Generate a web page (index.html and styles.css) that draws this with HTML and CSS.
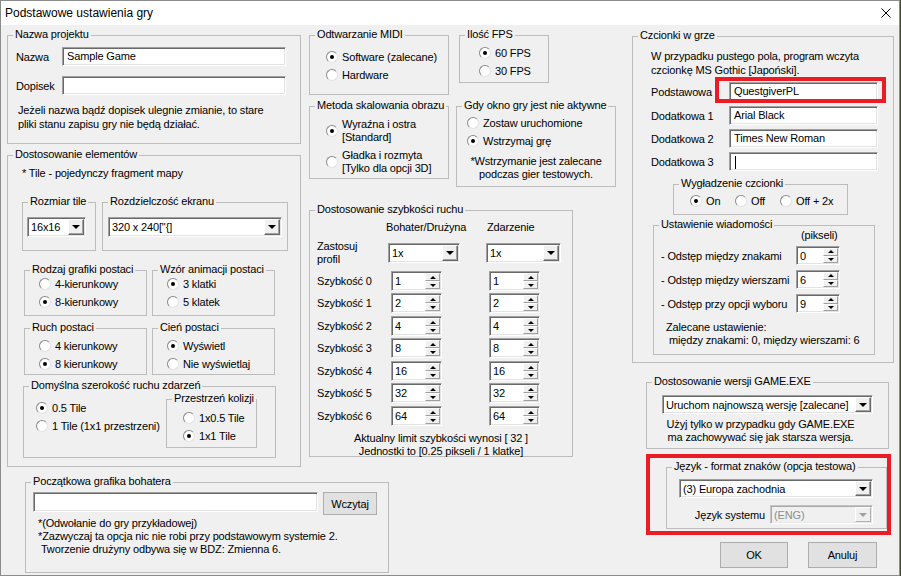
FILE: index.html
```html
<!DOCTYPE html>
<html lang="pl">
<head>
    <meta charset="UTF-8">
    <title>Podstawowe ustawienia gry</title>
    <link rel="stylesheet" href="styles.css">
</head>
<body>
<div class="window">
    <div class="titlebar">
        <span class="title">Podstawowe ustawienia gry</span>
        <svg class="close" width="10" height="10" viewBox="0 0 10 10"><path d="M0.5 0.5L9.5 9.5M9.5 0.5L0.5 9.5" stroke="#000" stroke-width="1"/></svg>
    </div>

    <div class="content">
        <div class="left">
            <div class="cols">
                <!-- left column -->
                <div class="col1">
                    <div class="group g-name">
                        <span class="cap">Nazwa projektu</span>
                        <div class="field"><span class="lbl">Nazwa</span><div class="edit w-name">Sample Game</div></div>
                        <div class="field gap10"><span class="lbl">Dopisek</span><div class="edit w-name"></div></div>
                        <p class="name-note">Jeżeli nazwa bądź dopisek ulegnie zmianie, to stare<br>pliki stanu zapisu gry nie będą działać.</p>
                    </div>

                    <div class="group g-elem">
                        <span class="cap">Dostosowanie elementów</span>
                        <p class="tile-note">* Tile - pojedynczy fragment mapy</p>
                        <div class="row r-screen">
                            <div class="group g-tile">
                                <span class="cap">Rozmiar tile</span>
                                <div class="combo w-tile"><span class="val">16x16</span><span class="drop"></span></div>
                            </div>
                            <div class="group g-res">
                                <span class="cap">Rozdzielczość ekranu</span>
                                <div class="combo w-res"><span class="val">320 x 240["{]</span><span class="drop"></span></div>
                            </div>
                        </div>
                        <div class="row r-char1">
                            <div class="group g-small">
                                <span class="cap">Rodzaj grafiki postaci</span>
                                <div class="opt"><span class="rb"></span>4-kierunkowy</div>
                                <div class="opt"><span class="rb on"></span>8-kierunkowy</div>
                            </div>
                            <div class="group g-small g-right">
                                <span class="cap">Wzór animacji postaci</span>
                                <div class="opt"><span class="rb on"></span>3 klatki</div>
                                <div class="opt"><span class="rb"></span>5 klatek</div>
                            </div>
                        </div>
                        <div class="row r-char2">
                            <div class="group g-small g-tall">
                                <span class="cap">Ruch postaci</span>
                                <div class="opt"><span class="rb"></span>4 kierunkowy</div>
                                <div class="opt"><span class="rb on"></span>8 kierunkowy</div>
                            </div>
                            <div class="group g-small g-tall g-right">
                                <span class="cap">Cień postaci</span>
                                <div class="opt"><span class="rb on"></span>Wyświetl</div>
                                <div class="opt"><span class="rb"></span>Nie wyświetlaj</div>
                            </div>
                        </div>
                        <div class="group g-default">
                            <span class="cap">Domyślna szerokość ruchu zdarzeń</span>
                            <div class="def-opts">
                                <div class="opt"><span class="rb on"></span>0.5 Tile</div>
                                <div class="opt"><span class="rb"></span>1 Tile (1x1 przestrzeni)</div>
                            </div>
                            <div class="group g-coll">
                                <span class="cap">Przestrzeń kolizji</span>
                                <div class="opt"><span class="rb"></span>1x0.5 Tile</div>
                                <div class="opt"><span class="rb on"></span>1x1 Tile</div>
                            </div>
                        </div>
                    </div>
                </div>

                <!-- middle column -->
                <div class="col2">
                    <div class="row r-top">
                        <div class="group g-midi">
                            <span class="cap">Odtwarzanie MIDI</span>
                            <div class="opt"><span class="rb on"></span>Software (zalecane)</div>
                            <div class="opt"><span class="rb"></span>Hardware</div>
                        </div>
                        <div class="group g-fps">
                            <span class="cap">Ilość FPS</span>
                            <div class="opt"><span class="rb on"></span>60 FPS</div>
                            <div class="opt"><span class="rb"></span>30 FPS</div>
                        </div>
                    </div>
                    <div class="row r-mid">
                        <div class="group g-scale">
                            <span class="cap">Metoda skalowania obrazu</span>
                            <div class="opt2"><span class="rb on"></span><span>Wyraźna i ostra<br>[Standard]</span></div>
                            <div class="opt2 second"><span class="rb"></span><span>Gładka i rozmyta<br>[Tylko dla opcji 3D]</span></div>
                        </div>
                        <div class="group g-pause">
                            <span class="cap">Gdy okno gry jest nie aktywne</span>
                            <div class="opt"><span class="rb"></span>Zostaw uruchomione</div>
                            <div class="opt"><span class="rb on"></span>Wstrzymaj grę</div>
                            <p class="pause-note">*Wstrzymanie jest zalecane<br>podczas gier testowych.</p>
                        </div>
                    </div>
                    <div class="group g-speed">
                        <span class="cap">Dostosowanie szybkości ruchu</span>
                        <div class="sp-head"><span class="h1">Bohater/Drużyna</span><span>Zdarzenie</span></div>
                        <div class="sp-profile">
                            <span class="sp-lbl">Zastosuj<br>profil</span>
                            <div class="combo w-prof1"><span class="val">1x</span><span class="drop"></span></div>
                            <div class="combo w-prof2"><span class="val">1x</span><span class="drop"></span></div>
                        </div>
                        <div class="sp-row m5"><span class="sp-name">Szybkość 0</span><div class="spin"><span class="val">1</span><span class="ud"><span class="up"></span><span class="dn"></span></span></div><div class="spin sp2"><span class="val">1</span><span class="ud"><span class="up"></span><span class="dn"></span></span></div></div>
                        <div class="sp-row m2"><span class="sp-name">Szybkość 1</span><div class="spin"><span class="val">2</span><span class="ud"><span class="up"></span><span class="dn"></span></span></div><div class="spin sp2"><span class="val">2</span><span class="ud"><span class="up"></span><span class="dn"></span></span></div></div>
                        <div class="sp-row m3"><span class="sp-name">Szybkość 2</span><div class="spin"><span class="val">4</span><span class="ud"><span class="up"></span><span class="dn"></span></span></div><div class="spin sp2"><span class="val">4</span><span class="ud"><span class="up"></span><span class="dn"></span></span></div></div>
                        <div class="sp-row m2"><span class="sp-name">Szybkość 3</span><div class="spin"><span class="val">8</span><span class="ud"><span class="up"></span><span class="dn"></span></span></div><div class="spin sp2"><span class="val">8</span><span class="ud"><span class="up"></span><span class="dn"></span></span></div></div>
                        <div class="sp-row m3"><span class="sp-name">Szybkość 4</span><div class="spin"><span class="val">16</span><span class="ud"><span class="up"></span><span class="dn"></span></span></div><div class="spin sp2"><span class="val">16</span><span class="ud"><span class="up"></span><span class="dn"></span></span></div></div>
                        <div class="sp-row m2"><span class="sp-name">Szybkość 5</span><div class="spin"><span class="val">32</span><span class="ud"><span class="up"></span><span class="dn"></span></span></div><div class="spin sp2"><span class="val">32</span><span class="ud"><span class="up"></span><span class="dn"></span></span></div></div>
                        <div class="sp-row m3"><span class="sp-name">Szybkość 6</span><div class="spin"><span class="val">64</span><span class="ud"><span class="up"></span><span class="dn"></span></span></div><div class="spin sp2"><span class="val">64</span><span class="ud"><span class="up"></span><span class="dn"></span></span></div></div>
                        <p class="sp-note">Aktualny limit szybkości wynosi [ 32 ]<br>Jednostki to [0.25 pikseli / 1 klatke]</p>
                    </div>
                </div>
            </div>

            <div class="group g-hero">
                <span class="cap">Początkowa grafika bohatera</span>
                <div class="hero-row">
                    <div class="edit w-hero"></div>
                    <div class="btn w-load">Wczytaj</div>
                </div>
                <p class="hero-note">*(Odwołanie do gry przykładowej)<br>*Zazwyczaj ta opcja nic nie robi przy podstawowym systemie 2.<br>&nbsp;Tworzenie drużyny odbywa się w BDZ: Zmienna 6.</p>
            </div>
        </div>

        <!-- right column -->
        <div class="right">
            <div class="group g-fonts">
                <span class="cap">Czcionki w grze</span>
                <p class="fonts-note">W przypadku pustego pola, program wczyta<br>czcionkę MS Gothic [Japoński].</p>
                <div class="frow m5"><span class="flbl">Podstawowa</span><div class="marked"><div class="edit w-font">QuestgiverPL</div><span class="mark"></span></div></div>
                <div class="frow m5"><span class="flbl">Dodatkowa 1</span><div class="edit w-font">Arial Black</div></div>
                <div class="frow m4"><span class="flbl">Dodatkowa 2</span><div class="edit w-font">Times New Roman</div></div>
                <div class="frow m4"><span class="flbl">Dodatkowa 3</span><div class="edit w-font"><span class="caret"></span></div></div>
                <div class="group g-smooth">
                    <span class="cap">Wygładzenie czcionki</span>
                    <div class="opt w45"><span class="rb on"></span>On</div>
                    <div class="opt w45"><span class="rb"></span>Off</div>
                    <div class="opt"><span class="rb"></span>Off + 2x</div>
                </div>
                <div class="group g-msg">
                    <span class="cap">Ustawienie wiadomości</span>
                    <p class="pix">(pikseli)</p>
                    <div class="mrow m4"><span class="mlbl">- Odstęp między znakami</span><div class="spin w-ms"><span class="val">0</span><span class="ud"><span class="up"></span><span class="dn"></span></span></div></div>
                    <div class="mrow m5"><span class="mlbl">- Odstęp między wierszami</span><div class="spin w-ms"><span class="val">6</span><span class="ud"><span class="up"></span><span class="dn"></span></span></div></div>
                    <div class="mrow m5"><span class="mlbl">- Odstęp przy opcji wyboru</span><div class="spin w-ms"><span class="val">9</span><span class="ud"><span class="up"></span><span class="dn"></span></span></div></div>
                    <p class="rec">Zalecane ustawienie:<br>&nbsp;między znakami: 0, między wierszami: 6</p>
                </div>
            </div>

            <div class="group g-exe">
                <span class="cap">Dostosowanie wersji GAME.EXE</span>
                <div class="combo w-exe"><span class="val">Uruchom najnowszą wersję [zalecane]</span><span class="drop"></span></div>
                <p class="exe-note">Użyj tylko w przypadku gdy GAME.EXE<br>ma zachowywać się jak starsza wersja.</p>
            </div>

            <div class="redbox">
                <div class="group g-lang">
                    <span class="cap">Język - format znaków (opcja testowa)</span>
                    <div class="combo w-lang"><span class="val">(3) Europa zachodnia</span><span class="drop"></span></div>
                    <div class="lang-row">
                        <span class="sys-lbl">Język systemu</span>
                        <div class="combo dis w-sys"><span class="val">(ENG)</span><span class="drop"></span></div>
                    </div>
                </div>
            </div>

            <div class="btns">
                <div class="btn w-ok">OK</div>
                <div class="btn w-cancel">Anuluj</div>
            </div>
        </div>
    </div>
</div>
</body>
</html>
```

FILE: styles.css
```css
* {
    box-sizing: border-box;
}
body {
    margin: 0;
    background: #3b5124;
    font-family: "Liberation Sans", Arial, sans-serif;
    font-size: 11px;
    letter-spacing: -0.15px;
    color: #000;
}
p {
    margin: 0;
}
.window {
    width: 900px;
    height: 576px;
    border: 1px solid #8c8c8c;
    background: #f0f0f0;
    overflow: hidden;
}
.titlebar {
    height: 24px;
    background: #fff;
    display: flex;
    align-items: center;
    justify-content: space-between;
    padding: 0 8px 0 4px;
}
.title {
    font-size: 12px;
    letter-spacing: 0;
}
.content {
    display: flex;
    padding: 10px 0 0 6px;
}
.cols, .row {
    display: flex;
    align-items: flex-start;
}

/* group box */
.group {
    position: relative;
    border: 1px solid #bcbcbc;
}
.cap {
    position: absolute;
    top: -8px;
    left: 5px;
    padding: 0 2px;
    background: #f0f0f0;
    line-height: 13px;
    white-space: nowrap;
}

/* radio */
.opt {
    display: flex;
    align-items: center;
    height: 18px;
    white-space: nowrap;
}
.opt2 {
    display: flex;
    align-items: center;
    line-height: 13px;
    white-space: nowrap;
}
.rb {
    position: relative;
    flex: none;
    width: 12px;
    height: 12px;
    margin-right: 4px;
    border-radius: 50%;
    background: #fff;
    border: 1px solid;
    border-color: #8a8a8a #e2e2e2 #e2e2e2 #8a8a8a;
}
.rb.on::after {
    content: "";
    position: absolute;
    left: 3px;
    top: 3px;
    width: 4px;
    height: 4px;
    border-radius: 50%;
    background: #000;
}

/* edit, combo, spin */
.edit, .combo, .spin {
    background: #fff;
    border: 1px solid;
    border-color: #a0a0a0 #fff #fff #a0a0a0;
    box-shadow: inset 1px 1px 0 #696969, inset -1px -1px 0 #e3e3e3;
}
.edit {
    height: 19px;
    padding: 0 4px;
    line-height: 17px;
    white-space: nowrap;
    overflow: hidden;
}
.combo {
    display: flex;
    height: 20px;
    padding: 1px;
}
.combo .val, .spin .val {
    flex: 1;
    padding-left: 2px;
    line-height: 16px;
    white-space: nowrap;
    overflow: hidden;
}
.drop {
    flex: none;
    width: 16px;
    background: #f0f0f0;
    border: 1px solid;
    border-color: #fff #696969 #696969 #fff;
    box-shadow: inset -1px -1px 0 #a0a0a0;
    display: flex;
    align-items: center;
    justify-content: center;
}
.drop::before {
    content: "";
    border-left: 4px solid transparent;
    border-right: 4px solid transparent;
    border-top: 4px solid #000;
}
.combo.dis {
    background: #f0f0f0;
    color: #8d8d8d;
    border-color: #c4c4c4 #fff #fff #c4c4c4;
    box-shadow: inset 1px 1px 0 #a9a9a9, inset -1px -1px 0 #e8e8e8;
}
.combo.dis .drop {
    border-color: #fff #b0b0b0 #b0b0b0 #fff;
    box-shadow: none;
}
.combo.dis .drop::before {
    border-top-color: #a0a0a0;
}
.spin {
    display: flex;
    width: 51px;
    height: 20px;
    padding: 1px;
}
.ud {
    flex: none;
    width: 15px;
    display: flex;
    flex-direction: column;
}
.ud span {
    flex: 1;
    background: #f0f0f0;
    border: 1px solid;
    border-color: #fff #a0a0a0 #a0a0a0 #fff;
    display: flex;
    align-items: center;
    justify-content: center;
}
.ud .up::before, .ud .dn::before {
    content: "";
    border-left: 3px solid transparent;
    border-right: 3px solid transparent;
}
.ud .up::before {
    border-bottom: 3px solid #000;
}
.ud .dn::before {
    border-top: 3px solid #000;
}
.btn {
    height: 23px;
    background: #e1e1e1;
    border: 1px solid #adadad;
    display: flex;
    align-items: center;
    justify-content: center;
}

/* left column */
.col1 {
    width: 294px;
}
.g-name {
    width: 294px;
    height: 109px;
    padding: 11px 0 0 8px;
}
.field {
    display: flex;
    align-items: center;
}
.gap10 {
    margin-top: 10px;
}
.lbl {
    width: 46px;
}
.w-name {
    width: 224px;
}
.name-note {
    margin-top: 8px;
    padding-left: 2px;
    line-height: 14px;
}
.g-elem {
    margin-top: 11px;
    width: 294px;
    height: 312px;
    padding-top: 10px;
}
.tile-note {
    padding-left: 14px;
    line-height: 14px;
}
.r-screen {
    margin: 22px 0 0 14px;
}
.g-tile {
    width: 74px;
    height: 49px;
    padding: 14px 0 0 4px;
}
.w-tile {
    width: 59px;
}
.g-res {
    margin-left: 6px;
    width: 186px;
    height: 49px;
    padding: 14px 0 0 5px;
}
.w-res {
    width: 174px;
}
.r-char1 {
    margin: 19px 0 0 16px;
}
.r-char2 {
    margin: 12px 0 0 16px;
}
.g-small {
    width: 123px;
    height: 46px;
    padding: 4px 0 0 14px;
}
.g-small.g-tall {
    height: 47px;
    padding-top: 8px;
}
.g-right {
    margin-left: 5px;
}
.g-default {
    display: flex;
    align-items: flex-start;
    margin: 11px 0 0 15px;
    width: 253px;
    height: 72px;
    padding-top: 12px;
}
.def-opts {
    width: 142px;
    padding-left: 12px;
}
.g-coll {
    width: 91px;
    height: 49px;
    padding: 9px 0 0 16px;
}
.g-hero {
    margin: 15px 0 0 18px;
    width: 364px;
    height: 91px;
    padding: 9px 0 0 7px;
}
.hero-row {
    display: flex;
    align-items: flex-start;
}
.w-hero {
    width: 285px;
    height: 20px;
}
.w-load {
    margin-left: 5px;
    width: 54px;
}
.hero-note {
    margin-top: 2px;
    padding-left: 5px;
    line-height: 13px;
    white-space: nowrap;
}

/* middle column */
.col2 {
    margin-left: 8px;
    width: 307px;
}
.g-midi {
    width: 140px;
    height: 60px;
    padding: 12px 0 0 16px;
}
.g-fps {
    margin-left: 10px;
    width: 90px;
    height: 48px;
    padding: 8px 0 0 19px;
}
.r-mid {
    margin-top: 11px;
}
.g-scale {
    width: 140px;
    height: 73px;
    padding: 11px 0 0 16px;
}
.opt2.second {
    margin-top: 5px;
}
.g-pause {
    margin-left: 7px;
    width: 160px;
    height: 81px;
    padding-top: 7px;
}
.g-pause .opt {
    padding-left: 10px;
}
.pause-note {
    margin-top: 5px;
    line-height: 13px;
    text-align: center;
}
.g-speed {
    margin-top: 23px;
    width: 264px;
    height: 247px;
    padding: 10px 0 0 7px;
}
.sp-head {
    display: flex;
    line-height: 13px;
}
.h1 {
    margin-left: 69px;
    width: 101px;
}
.sp-profile {
    display: flex;
    align-items: center;
    margin-top: 6px;
}
.sp-lbl {
    width: 71px;
    line-height: 13px;
}
.w-prof1 {
    width: 72px;
}
.w-prof2 {
    margin-left: 26px;
    width: 75px;
}
.sp-row {
    display: flex;
    align-items: center;
    height: 20px;
}
.sp-name {
    width: 74px;
}
.spin.sp2 {
    margin-left: 47px;
}
.m2 { margin-top: 2px; }
.m3 { margin-top: 3px; }
.m4 { margin-top: 4px; }
.m5 { margin-top: 5px; }
.sp-note {
    margin-top: 6px;
    padding-right: 7px;
    line-height: 13px;
    text-align: center;
}

/* right column */
.right {
    margin: 1px 0 0 16px;
    width: 262px;
}
.g-fonts {
    width: 262px;
    height: 327px;
    padding: 12px 0 0 18px;
}
.fonts-note {
    line-height: 14px;
}
.frow {
    display: flex;
    align-items: center;
}
.flbl {
    width: 78px;
}
.w-font {
    width: 149px;
}
.marked {
    position: relative;
}
.mark {
    position: absolute;
    left: -14px;
    top: -5px;
    right: -8px;
    bottom: -2px;
    border: 4px solid #ec1c24;
}
.caret {
    display: inline-block;
    width: 1px;
    height: 13px;
    margin-left: 1px;
    background: #000;
    vertical-align: middle;
}
.g-smooth {
    display: flex;
    margin: 13px 0 0 22px;
    width: 175px;
    height: 31px;
    padding: 7px 0 0 16px;
}
.w45 {
    width: 45px;
}
.g-msg {
    margin: 10px 0 0 2px;
    width: 222px;
    height: 130px;
    padding: 3px 0 0 7px;
}
.pix {
    margin-left: 140px;
    line-height: 13px;
}
.mrow {
    display: flex;
    align-items: center;
}
.mlbl {
    width: 135px;
    white-space: nowrap;
}
.spin.w-ms {
    width: 44px;
    height: 19px;
}
.rec {
    margin-top: 8px;
    padding-left: 5px;
    line-height: 13px;
}
.g-exe {
    margin: 19px 0 0 14px;
    width: 243px;
    height: 67px;
    padding: 12px 0 0 15px;
}
.w-exe {
    width: 211px;
    height: 19px;
}
.exe-note {
    margin-top: 4px;
    padding-right: 29px;
    line-height: 13px;
    text-align: center;
}
.redbox {
    margin: 5px 0 0 14px;
    width: 245px;
    height: 81px;
    border: 4px solid #ec1c24;
    padding: 9px 0 0 16px;
}
.g-lang {
    width: 221px;
    height: 62px;
    padding: 11px 0 0 12px;
}
.w-lang {
    width: 194px;
    height: 19px;
}
.lang-row {
    display: flex;
    align-items: center;
    justify-content: flex-end;
    margin-top: 7px;
    width: 194px;
}
.sys-lbl {
    margin-right: 5px;
}
.w-sys {
    width: 103px;
    height: 19px;
}
.btns {
    display: flex;
    margin-top: 7px;
}
.w-ok {
    margin-left: 88px;
    width: 68px;
    height: 26px;
}
.w-cancel {
    margin-left: 20px;
    width: 69px;
    height: 26px;
}
```
